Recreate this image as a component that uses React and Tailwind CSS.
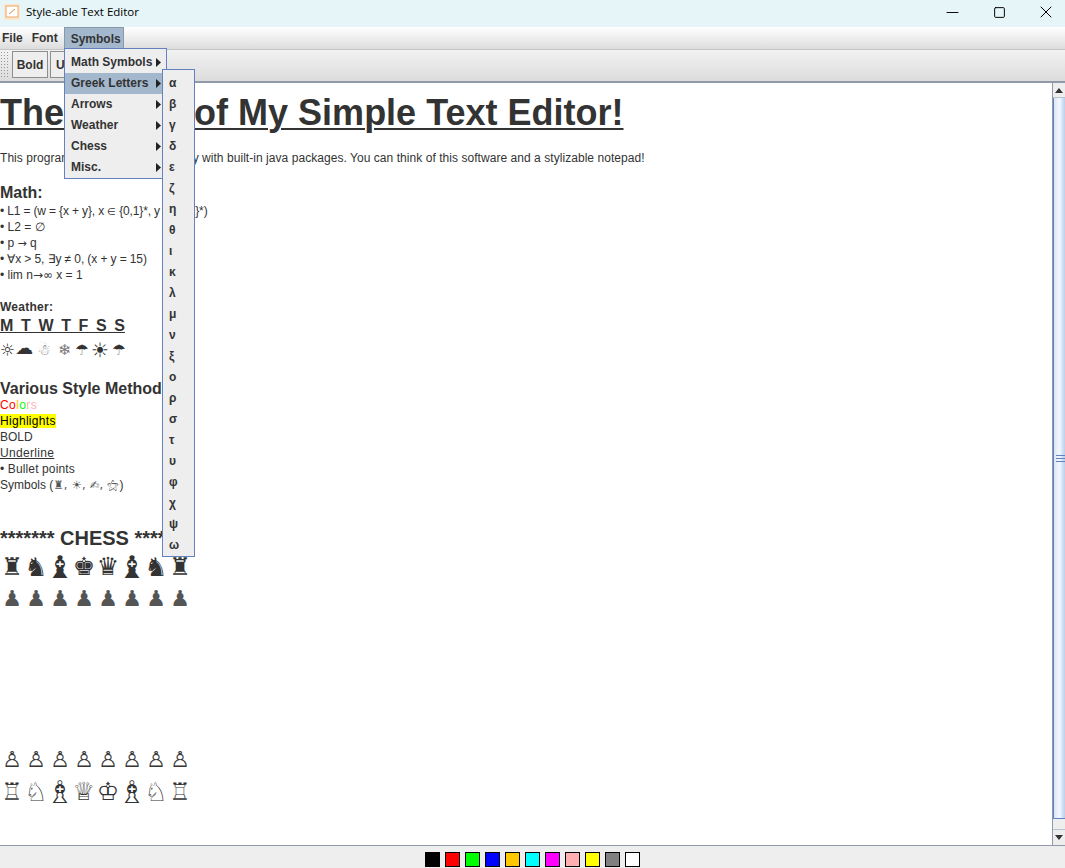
import { X, Square, Minus } from "lucide-react";

const menuItems = ["Math Symbols", "Greek Letters", "Arrows", "Weather", "Chess", "Misc."];
const greek = "αβγδεζηθικλμνξορστυφχψω".split("");
const swatches = [
  "bg-[#000000]", "bg-[#ff0000]", "bg-[#00ff00]", "bg-[#0000ff]", "bg-[#ffc800]", "bg-[#00ffff]",
  "bg-[#ff00ff]", "bg-[#ffafaf]", "bg-[#ffff00]", "bg-[#808080]", "bg-[#ffffff]",
];
const pieceSize = {
  "♜": "text-[24px]", "♞": "text-[26px]", "♝": "text-[31px] -translate-x-[2px]", "♚": "text-[25px]", "♛": "text-[25px]",
  "♖": "text-[24px]", "♘": "text-[26px]", "♗": "text-[31px] -translate-x-[2px]", "♔": "text-[25px]", "♕": "text-[25px]",
  "♟": "text-[22px] text-[#555]", "♙": "text-[22px]",
};
const blackBack = ["♜", "♞", "♝", "♚", "♛", "♝", "♞", "♜"];
const whiteBack = ["♖", "♘", "♗", "♕", "♔", "♗", "♘", "♖"];
const weather = [
  { g: "☼", w: "w-[14px]", s: "text-[17px]" },
  { g: "☁", w: "w-[20px]", s: "text-[18px] -translate-y-[3px]" },
  { g: "☃", w: "w-[20px]", s: "text-[15px] text-[#777]" },
  { g: "❄", w: "w-[21px]", s: "text-[15px] text-[#777]" },
  { g: "☂", w: "w-[14px]", s: "text-[15px]" },
  { g: "☀", w: "w-[22px]", s: "text-[20px]" },
  { g: "☂", w: "w-[16px]", s: "text-[15px]" },
];

function Arrow() {
  return (
    <svg width="5" height="9" viewBox="0 0 5 9" className="absolute right-[5px] top-[6px]">
      <path d="M0 0 L5 4.5 L0 9 Z" fill="#222" />
    </svg>
  );
}

function Line({ className = "", children }) {
  return <div className={`h-4 leading-4 text-xs whitespace-pre ${className}`}>{children}</div>;
}

function ChessRow({ pieces, className = "" }) {
  return (
    <div className={`flex leading-8 h-8 font-['DejaVu_Sans',sans-serif] ${className}`}>
      {pieces.map((p, i) => (
        <span key={i} className={`w-6 text-center ${pieceSize[p]}`}>{p}</span>
      ))}
    </div>
  );
}

function Editor() {
  return (
    <div className="flex-1 bg-white text-[#333] overflow-hidden">
      <h1 className="text-4xl font-bold leading-[54px] h-[54px] mt-[3px] underline underline-offset-[3px] decoration-2 whitespace-pre">
        The <span className="tracking-[-1px]">Basics</span> of My Simple Text Editor!
      </h1>
      <p className="text-xs leading-4 h-4 mt-[10px] whitespace-pre tracking-[0.05px]">
        This program was created <span className="tracking-[-0.2px]">completely</span> with built-in java packages. You can think of this software and a stylizable notepad!
      </p>
      <div className="text-base font-bold leading-5 h-5 mt-[17px]">Math:</div>
      <div>
        <Line className="tracking-[-0.15px]">• L1 = (w = {"{x + y}"}, x <span className="text-[10px]">∈</span> {"{0,1}"}*, y <span className="text-[10px]">∈</span> {"{0,1}"}*)</Line>
        <Line>• L2 = ∅</Line>
        <Line>• p <span className="font-['DejaVu_Sans',sans-serif] text-[11px]">→</span> q</Line>
        <Line className="tracking-[-0.1px]">• ∀x &gt; 5, ∃y ≠ 0, (x + y = 15)</Line>
        <Line>• lim n<span className="font-['DejaVu_Sans',sans-serif] text-[12px]">→∞</span> x = 1</Line>
      </div>
      <Line className="font-bold mt-4 tracking-[0.25px]">Weather:</Line>
      <div className="h-5 mt-[1px] leading-5 text-base font-bold underline [word-spacing:3.2px] whitespace-pre">M T W T F S S</div>
      <div className="flex h-[29px] leading-[29px] font-['DejaVu_Sans',sans-serif]">
        {weather.map((item, i) => (
          <span key={i} className={`text-center ${item.w} ${item.s}`}>{item.g}</span>
        ))}
      </div>
      <div className="text-base font-bold leading-5 h-[18px] mt-[14px] whitespace-pre">Various Style Methods:</div>
      <Line className="tracking-[0.4px]">
        <span className="text-[#ff0000]">Co</span>
        <span className="text-[#ffc800]">l</span>
        <span className="text-[#00ff00]">o</span>
        <span className="text-[#ffafaf]">rs</span>
      </Line>
      <Line className="tracking-[0.3px]">
        <span className="bg-[#ffff00] text-black">Highlights</span>
      </Line>
      <Line>BOLD</Line>
      <Line className="underline tracking-[0.33px]">Underline</Line>
      <Line className="tracking-[0.13px]">• Bullet points</Line>
      <Line>
        Symbols (<span className="font-['DejaVu_Sans',sans-serif] text-[11.5px] tracking-[0.2px] text-[#555]">♜, ☀, ✍, ⚝</span>)
      </Line>
      <div className="text-xl font-bold leading-6 h-6 mt-[33px] whitespace-pre">******* CHESS *******</div>
      <ChessRow pieces={blackBack} className="mt-[1px]" />
      <ChessRow pieces={Array(8).fill("♟")} />
      <div className="h-[129px]" />
      <ChessRow pieces={Array(8).fill("♙")} />
      <ChessRow pieces={whiteBack} />
    </div>
  );
}

export default function App() {
  return (
    <div className="relative w-[1065px] h-[868px] overflow-hidden flex flex-col bg-[#eeeeee] text-[#333] font-['Liberation_Sans',Arial,sans-serif]">
      {/* window title bar */}
      <div className="h-[27px] bg-[#e6f5f7] flex items-center pl-[4px] pb-[3px] text-black">
        <svg width="16" height="16" viewBox="0 0 16 16">
          <rect x="0" y="0" width="16" height="16" fill="#fbe6cf" />
          <rect x="2" y="2" width="12" height="11" fill="#fff" stroke="#e8a868" />
          <path d="M5 10 L11 5" stroke="#d08a4a" fill="none" />
        </svg>
        <span className="ml-[6px] text-[11.5px] font-['Open_Sans',sans-serif]">Style-able Text Editor</span>
        <div className="ml-auto flex items-center">
          <Minus size={19} strokeWidth={1.2} className="mr-[31px]" />
          <Square size={13} strokeWidth={1.8} className="mr-[30px]" />
          <X size={20} strokeWidth={1.2} className="mr-[9px]" />
        </div>
      </div>

      {/* menu bar */}
      <div className="h-[23px] bg-gradient-to-b from-[#ffffff] to-[#dddddd] border-b border-[#c4c4c4] flex text-xs font-bold">
        <span className="pl-[2px] pr-[4px] leading-[22px]">File</span>
        <span className="px-[5px] leading-[22px]">Font</span>
        <span className="ml-[1px] w-[60px] h-[22px] pl-[6px] leading-[22px] bg-[#a3b8cc] border-t border-l border-r border-[#8a99a6]">Symbols</span>
      </div>

      {/* toolbar */}
      <div className="h-[33px] bg-gradient-to-b from-[#f2f2f2] to-[#dcdcdc] border-b-2 border-[#8f99a8] flex items-start">
        <div className="w-[8px] h-[27px] mt-[1px] bg-[radial-gradient(#999_1px,transparent_1px)] bg-[length:3px_3px]" />
        <button className="ml-[4px] mt-[1px] w-[36px] h-[27px] border border-[#8e8e8e] bg-[#eeeeee] text-xs font-bold">Bold</button>
        <button className="ml-[2px] mt-[1px] w-[70px] h-[27px] border border-[#8e8e8e] bg-[#eeeeee] text-xs font-bold text-left pl-[5px]">Underline</button>
      </div>

      {/* editor and scroll bar */}
      <div className="flex-1 flex min-h-0">
        <Editor />
        <div className="w-[13px] flex flex-col border-l border-[#8f99a8] bg-[#eeeeee]">
          <div className="h-[15px] flex items-center justify-center border-b border-[#b8c4d0]">
            <div className="w-0 h-0 border-x-[4px] border-x-transparent border-b-[5px] border-b-[#333]" />
          </div>
          <div className="flex-1 bg-gradient-to-r from-[#d8e6f8] via-[#f4f8fd] to-[#b8cfee] border-l border-[#6382bf] flex flex-col items-end justify-center gap-[2px]">
            <div className="w-[9px] h-[1px] bg-[#6382bf]" />
            <div className="w-[9px] h-[1px] bg-[#6382bf]" />
            <div className="w-[9px] h-[1px] bg-[#6382bf]" />
          </div>
          <div className="h-[11px] border-t border-[#6382bf]" />
          <div className="h-[16px] flex items-center justify-center border-t border-[#b8c4d0]">
            <div className="w-0 h-0 border-x-[4px] border-x-transparent border-t-[5px] border-t-[#333]" />
          </div>
        </div>
      </div>

      {/* colour palette */}
      <div className="h-[23px] border-t border-[#8f99a8] flex justify-center gap-[5px] pt-[6px]">
        {swatches.map((c, i) => (
          <div key={i} className={`w-[15px] h-[15px] border border-black ${c}`} />
        ))}
      </div>

      {/* open Symbols menu */}
      <div className="absolute left-[64px] top-[48px] w-[103px] h-[131px] bg-[#eeeeee] border border-[#6382bf] text-xs font-bold pt-[3px]">
        {menuItems.map((item, i) => (
          <div key={item} className={`relative h-[21px] leading-[21px] pl-[6px] ${i === 1 ? "bg-[#a3b8cc]" : ""}`}>
            {item}
            <Arrow />
          </div>
        ))}
      </div>

      {/* Greek Letters submenu */}
      <div className="absolute left-[162px] top-[69px] w-[33px] h-[488px] bg-[#eeeeee] border border-[#6382bf] text-xs font-bold pt-[3px]">
        {greek.map((g) => (
          <div key={g} className="h-[21px] leading-[21px] pl-[6px]">{g}</div>
        ))}
      </div>
    </div>
  );
}
